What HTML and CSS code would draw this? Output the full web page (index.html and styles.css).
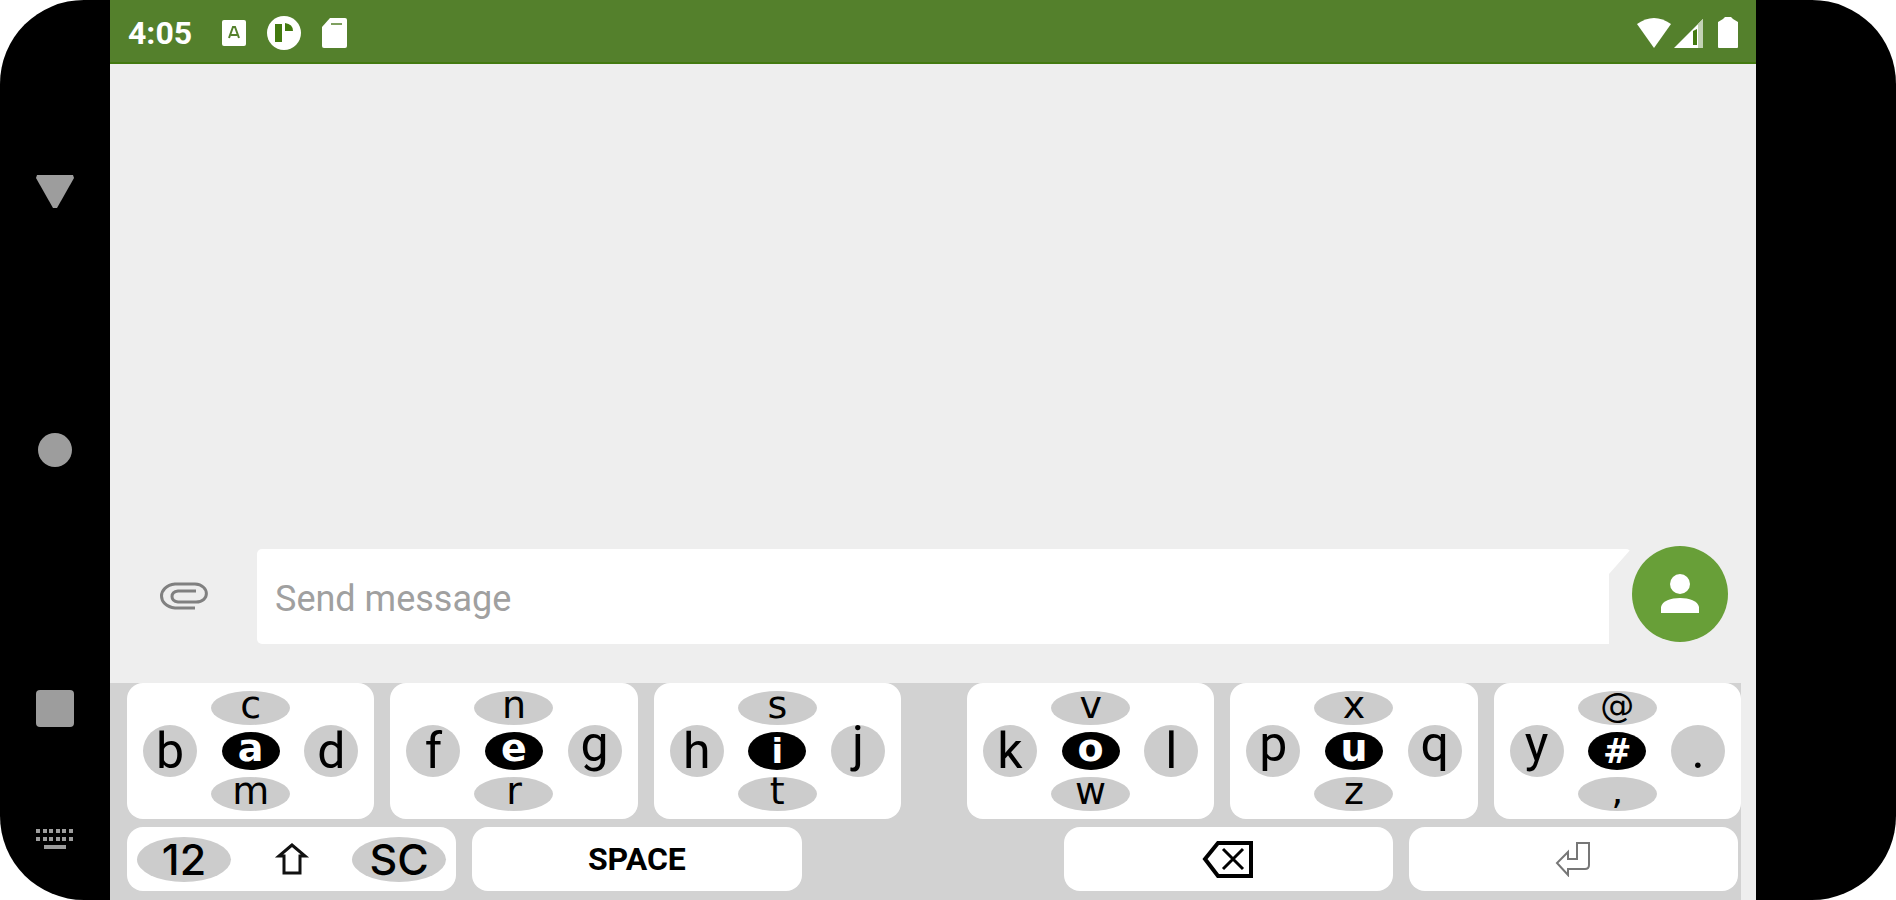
FILE: index.html
```
<!DOCTYPE html>
<html lang="en">
<head>
  <meta charset="UTF-8">
  <meta name="viewport" content="width=device-width, initial-scale=1.0">
  <title>Messages</title>
  <link rel="stylesheet" href="styles.css">
</head>
<body>
  <div class="phone">
    <nav class="nav-bar">
      <div class="nav-main">
        <button class="nav-btn" aria-label="Back">
          <svg width="38" height="34" viewBox="0 0 38 34"><path d="M1 0h36l1 3-17 30h-4L0 3z"/></svg>
        </button>
        <button class="nav-btn" aria-label="Home">
          <svg width="34" height="34" viewBox="0 0 34 34"><circle cx="17" cy="17" r="17"/></svg>
        </button>
        <button class="nav-btn" aria-label="Recent apps">
          <svg width="38" height="37" viewBox="0 0 38 37"><rect width="38" height="37" rx="4"/></svg>
        </button>
      </div>
      <button class="nav-btn" aria-label="Switch keyboard">
        <svg width="38" height="24" viewBox="0 0 38 24">
          <path d="M0 2h4v4H0zM7 2h4v4H7zM13 2h4v4h-4zM20 2h4v4h-4zM26 2h4v4h-4zM33 2h4v4h-4zM0 10h4v4H0zM7 10h4v4H7zM13 10h4v4h-4zM20 10h4v4h-4zM26 10h4v4h-4zM33 10h4v4h-4zM8 18h22v4H8z"/>
        </svg>
      </button>
    </nav>

    <main class="screen">
      <header class="status-bar">
        <span class="clock">4:05</span>
        <div class="notifications">
          <svg width="24" height="26" viewBox="0 0 24 26">
            <rect width="24" height="26" rx="2" fill="#fff"/>
            <path d="M7 18l4-11h2l4 11M9 15h6" fill="none" stroke="#54802c" stroke-width="2"/>
          </svg>
          <svg width="34" height="34" viewBox="0 0 34 34">
            <circle cx="17" cy="17" r="17" fill="#fff"/>
            <path d="M8 8h7v18H8zM18 7q8 1 8 8h-8z" fill="#437a10"/>
          </svg>
          <svg width="25" height="32" viewBox="0 0 25 32">
            <path d="M8 1h15q2 0 2 2v26q0 2-2 2H2q-2 0-2-2V10z" fill="#fff"/>
            <path d="M9 7h11" stroke="#7fa060" stroke-width="2"/>
          </svg>
        </div>
        <div class="indicators">
          <svg width="35" height="32" viewBox="0 0 35 32">
            <path d="M0 7Q17-5 34 7L17 31z" fill="#fff"/>
          </svg>
          <svg width="32" height="32" viewBox="0 0 32 32">
            <path d="M30 2v29H1z" fill="#fff"/>
            <path d="M25 7l5-5v29h-5z" fill="#c3d2b5"/>
            <path d="M20 14l4-2v16h-4z" fill="#437a10"/>
          </svg>
          <svg class="battery" width="20" height="33" viewBox="0 0 20 33">
            <path d="M5 3l2-2h6l2 2 5 3v25q0 1-1 1H1q-1 0-1-1V6z" fill="#fff"/>
          </svg>
        </div>
      </header>

      <section class="conversation"></section>

      <form class="composer">
        <button type="button" class="attach" aria-label="Attach file">
          <svg width="48" height="29" viewBox="0 0 48 29" fill="none" stroke="#808080" stroke-width="3">
            <path d="M35 26H15C-3 24-3 4 15 2H35C50 3 50 20 36 20H18C10 19 10 10 18 9H36"/>
          </svg>
        </button>
        <div class="bubble">
          <input type="text" class="message" placeholder="Send message" aria-label="Message">
        </div>
        <button type="button" class="contact" aria-label="Contact">
          <svg width="38" height="40" viewBox="0 0 38 40" fill="#fff">
            <circle cx="19" cy="10" r="10"/>
            <path d="M0 39v-6c2-12 36-12 38 0v6z"/>
          </svg>
        </button>
      </form>

      <section class="keyboard">
        <div class="letters">
          <div class="half">
            <div class="key">
              <button class="side">b</button>
              <button class="wide">c</button>
              <button class="center">a</button>
              <button class="wide">m</button>
              <button class="side">d</button>
            </div>
            <div class="key">
              <button class="side">f</button>
              <button class="wide">n</button>
              <button class="center">e</button>
              <button class="wide">r</button>
              <button class="side tail">g</button>
            </div>
            <div class="key">
              <button class="side">h</button>
              <button class="wide">s</button>
              <button class="center tall">i</button>
              <button class="wide">t</button>
              <button class="side tail">j</button>
            </div>
          </div>
          <div class="half">
            <div class="key">
              <button class="side">k</button>
              <button class="wide">v</button>
              <button class="center">o</button>
              <button class="wide">w</button>
              <button class="side">l</button>
            </div>
            <div class="key">
              <button class="side tail">p</button>
              <button class="wide">x</button>
              <button class="center">u</button>
              <button class="wide">z</button>
              <button class="side tail">q</button>
            </div>
            <div class="key">
              <button class="side tail">y</button>
              <button class="wide symbol">@</button>
              <button class="center tall">#</button>
              <button class="wide">,</button>
              <button class="side">.</button>
            </div>
          </div>
        </div>

        <div class="functions">
          <div class="half">
            <div class="bar modes">
              <button class="mode">12</button>
              <button class="shift" aria-label="Shift">
                <svg width="36" height="34" viewBox="0 0 36 34" fill="none" stroke="#111" stroke-width="3">
                  <path d="M18 3L5 14h5v17h16V14h5z"/>
                </svg>
              </button>
              <button class="mode">SC</button>
            </div>
            <button class="bar space">SPACE</button>
          </div>
          <div class="half">
            <button class="bar" aria-label="Delete">
              <svg width="52" height="38" viewBox="0 0 52 38" fill="none" stroke="#000" stroke-width="4">
                <path d="M16 3h33v33H16L3 19z"/>
                <path d="M21 9l20 20M41 9L21 29" stroke-width="3"/>
              </svg>
            </button>
            <button class="bar" aria-label="Enter">
              <svg width="36" height="36" viewBox="0 0 36 36" fill="none" stroke="#777" stroke-width="2">
                <path d="M22 2h12v22q0 4-4 4H13v6L2 22l11-11v7h9z"/>
              </svg>
            </button>
          </div>
        </div>
      </section>
    </main>
  </div>
</body>
</html>
```
FILE: styles.css
```
:root {
  --status: #54802c;
  --accent: #689f38;
  --screen: #eeeeee;
  --board: #d2d2d2;
  --spot: #cccccc;
  --nav: #9d9d9d;
}

* {
  margin: 0;
  padding: 0;
  box-sizing: border-box;
}

body {
  font-family: Roboto, sans-serif;
  background: #fff;
}

button {
  border: none;
  background: none;
  color: #000;
  font-family: inherit;
  cursor: pointer;
}

svg {
  display: block;
}

.phone {
  display: flex;
  min-height: 100vh;
  padding-right: 140px;
  background: #000;
  border-radius: 84px;
}

/* system navigation */
.nav-bar {
  display: flex;
  flex-direction: column;
  align-items: center;
  width: 110px;
  padding: 175px 0 49px;
}

.nav-main {
  flex: 1;
  display: flex;
  flex-direction: column;
  align-items: center;
  justify-content: space-between;
  margin-bottom: 100px;
}

.nav-btn {
  fill: var(--nav);
}

.screen {
  flex: 1;
  display: flex;
  flex-direction: column;
  background: var(--screen);
}

/* status bar */
.status-bar {
  display: flex;
  align-items: center;
  height: 64px;
  padding: 3px 18px 0;
  background: var(--status);
  border-bottom: 2px solid #437a10;
  color: #fff;
}

.clock {
  font-size: 32px;
  font-weight: 700;
}

.notifications {
  display: flex;
  align-items: center;
  gap: 21px;
  margin-left: 30px;
}

.indicators {
  display: flex;
  align-items: center;
  gap: 1px;
  margin-left: auto;
}

.battery {
  margin-left: 12px;
}

.conversation {
  flex: 1;
}

/* message box */
.composer {
  display: flex;
  align-items: flex-end;
  padding: 0 28px 39px 0;
}

.attach {
  display: flex;
  align-items: center;
  justify-content: center;
  width: 147px;
  height: 96px;
}

.bubble {
  flex: 1;
  margin-right: 1px;
  padding-right: 22px;
  background: #fff;
  border-radius: 5px;
  clip-path: polygon(0 0, 100% 0, calc(100% - 22px) 25px, calc(100% - 22px) 100%, 0 100%);
}

.message {
  display: block;
  width: 100%;
  height: 95px;
  padding: 4px 18px 0;
  border: none;
  outline: none;
  background: none;
  font-family: inherit;
  font-size: 36px;
}

.message::placeholder {
  color: #a0a0a0;
}

.contact {
  display: flex;
  align-items: center;
  justify-content: center;
  width: 96px;
  height: 96px;
  margin-bottom: 2px;
  border-radius: 50%;
  background: var(--accent);
}

/* keyboard */
.keyboard {
  display: flex;
  flex-direction: column;
  gap: 8px;
  margin-right: 15px;
  padding: 0 0 9px 17px;
  background: var(--board);
}

.letters {
  display: flex;
  gap: 66px;
}

.functions {
  display: flex;
  gap: 262px;
  padding-right: 3px;
}

.half {
  flex: 1;
  display: flex;
  gap: 16px;
}

.key {
  flex: 1;
  display: grid;
  grid-template-columns: 54px 1fr 54px;
  grid-template-rows: 34px 52px 34px;
  grid-auto-flow: column;
  place-items: center;
  padding: 8px 16px;
  background: #fff;
  border-radius: 16px;
}

.side {
  grid-row: 1 / 4;
  width: 54px;
  height: 52px;
  border-radius: 50%;
  background: var(--spot);
  font-size: 50px;
  line-height: 52px;
}

.tail {
  line-height: 38px;
  padding-bottom: 14px;
}

.wide {
  width: 79px;
  height: 34px;
  border-radius: 50%;
  background: var(--spot);
  font-family: "DejaVu Sans", sans-serif;
  font-size: 38px;
  line-height: 28px;
  padding-bottom: 6px;
}

.symbol {
  font-size: 34px;
}

.center {
  width: 58px;
  height: 38px;
  border-radius: 50%;
  background: #000;
  color: #fff;
  font-family: "DejaVu Sans", sans-serif;
  font-size: 38px;
  font-weight: 700;
  line-height: 32px;
  padding-bottom: 6px;
}

.tall {
  font-size: 34px;
  line-height: 38px;
  padding-bottom: 0;
}

.bar {
  flex: 1;
  display: flex;
  align-items: center;
  justify-content: center;
  height: 64px;
  background: #fff;
  border-radius: 16px;
}

.modes {
  justify-content: space-between;
}

.mode {
  width: 94px;
  height: 45px;
  margin: 0 10px;
  border-radius: 50%;
  background: var(--spot);
  font-family: Inter, sans-serif;
  font-size: 43px;
  font-weight: 500;
  line-height: 45px;
}

.space {
  font-size: 32px;
  font-weight: 700;
}
```
